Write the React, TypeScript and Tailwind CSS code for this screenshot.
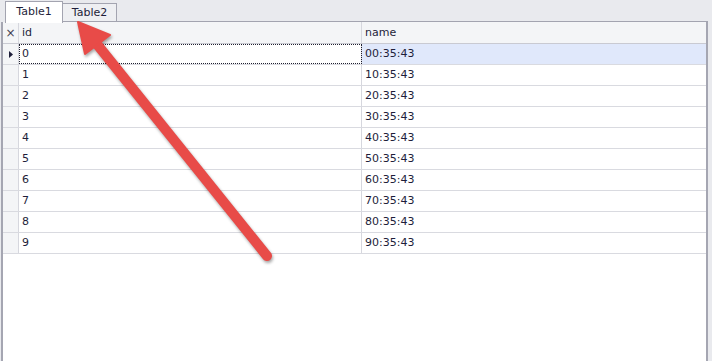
import React from 'react';

const rows = Array.from({ length: 10 }, (_, i) => ({ id: i, name: `${i}0:35:43` }));

function Arrow() {
  return (
    <svg
      className="absolute left-0 top-0 pointer-events-none"
      width="712"
      height="361"
      style={{ filter: 'drop-shadow(1px 2px 1.5px rgba(0,0,0,0.35))' }}
    >
      <line x1="267" y1="256" x2="96" y2="43" stroke="#e84b48" strokeWidth="10" strokeLinecap="round" />
      <polygon points="78,22 110,35 85,54" fill="#e84b48" stroke="#e84b48" strokeWidth="2" strokeLinejoin="round" />
    </svg>
  );
}

export default function App() {
  return (
    <div
      className="relative w-[712px] h-[361px] bg-[#e9eaee] overflow-hidden text-[11px] text-[#1e1e3a] flex flex-col"
      style={{ fontFamily: '"DejaVu Sans", Tahoma, sans-serif' }}
    >
      <div className="h-[22px] flex items-end pl-[5px] shrink-0">
        <div className="w-[58px] h-[22px] bg-white border-l border-t border-r border-[#a3a4b0] flex items-center justify-center relative top-[1px] z-10">
          Table1
        </div>
        <div className="w-[54px] h-[19px] bg-[#eeeff2] border-t border-r border-b border-[#a3a4b0] flex items-center justify-center pt-[1px]">
          Table2
        </div>
        <div className="flex-1 h-[22px] border-b border-[#a3a4b0] mr-[4px]" />
      </div>
      <div className="ml-[1px] w-[707px] flex-1 bg-white border-l-2 border-r-2 border-[#a5a6b2] flex flex-col">
        <div className="h-[22px] flex bg-[#f4f5f7] border-b border-[#c9cad2] shrink-0">
          <div className="w-[16px] border-r border-[#d6d7de] flex items-center justify-center text-[12px] text-[#404050] pt-[1px]">
            ×
          </div>
          <div className="w-[343px] border-r border-[#d6d7de] flex items-center pl-[3px] pt-[1px]">id</div>
          <div className="flex-1 flex items-center pl-[3px] pt-[1px]">name</div>
        </div>
        {rows.map((r, i) => (
          <div key={r.id} className="h-[21px] flex border-b border-[#d9dae0] shrink-0">
            <div className="w-[16px] bg-[#f4f5f7] border-r border-[#d6d7de] flex items-center justify-center">
              {i === 0 && (
                <svg width="4" height="7" viewBox="0 0 4 7">
                  <polygon points="0,0 4,3.5 0,7" fill="#1e1e3a" />
                </svg>
              )}
            </div>
            <div
              className={`w-[343px] border-r border-[#d6d7de] flex items-center pl-[3px] ${
                i === 0 ? 'outline-1 outline-dotted outline-[#202030] -outline-offset-1' : ''
              }`}
            >
              {r.id}
            </div>
            <div className={`flex-1 flex items-center pl-[3px] ${i === 0 ? 'bg-[#e0e8fb]' : ''}`}>{r.name}</div>
          </div>
        ))}
      </div>
      <Arrow />
    </div>
  );
}
